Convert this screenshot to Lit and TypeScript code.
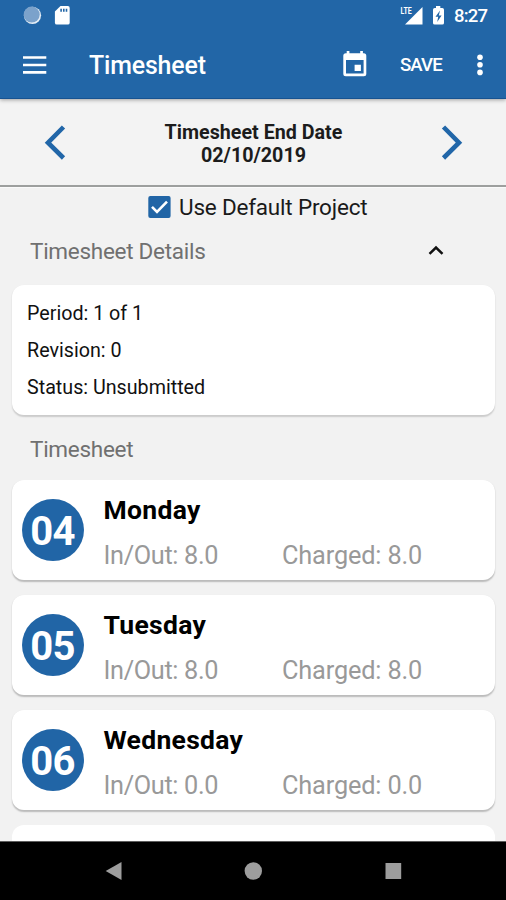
import { LitElement, html, css } from "lit";
import { customElement, property } from "lit/decorators.js";

interface Day {
  date: string;
  name: string;
  inOut: string;
  charged: string;
}

const DAYS: Day[] = [
  { date: "04", name: "Monday", inOut: "8.0", charged: "8.0" },
  { date: "05", name: "Tuesday", inOut: "8.0", charged: "8.0" },
  { date: "06", name: "Wednesday", inOut: "0.0", charged: "0.0" },
];

@customElement("status-bar")
class StatusBar extends LitElement {
  static styles = css`
    :host { display: flex; height: 31px; align-items: flex-start; color: #fff; }
    .left { flex: 1; }
    svg { display: block; }
    .lte { font: 700 9.5px Roboto, sans-serif; fill: #fff; }
    .clock { width: 52px; font: 500 18.5px/32px Roboto, sans-serif; letter-spacing: -0.8px; white-space: nowrap; }
  `;
  render() {
    return html`
      <div class="left">
        <svg width="80" height="31" viewBox="0 0 80 31">
          <circle cx="32.5" cy="15.3" r="8.6" fill="#e4edf5" />
          <circle cx="31.7" cy="14.6" r="8" fill="#7ba2cb" />
          <path d="M60.5 6h7.3q1.9 0 1.9 1.9v14.8q0 1.9-1.9 1.9h-11q-1.9 0-1.9-1.9V11.6z" fill="#fff" />
          <path d="M60.3 8.7h1.6v3h-1.6zM63 8.7h1.6v3H63zM65.7 8.7h1.6v3h-1.6z" fill="#2266a7" />
        </svg>
      </div>
      <svg width="54" height="31" viewBox="400 0 54 31">
        <path d="M422.5 7v17.6H405z" fill="#fff" />
        <path d="M400 5h11.8v10H400z" fill="#2266a7" />
        <text class="lte" x="400.5" y="14" textLength="11.300" lengthAdjust="spacingAndGlyphs">LTE</text>
        <path d="M436 6h4.3v2h2q1.7 0 1.7 1.7v13.2q0 1.7-1.7 1.7h-7.6q-1.7 0-1.7-1.7V9.700q0-1.7 1.700-1.7H436z" fill="#fff" />
        <path d="M440 10.500l-4.500 6.200h2.700l-1 5.200 4.400-6.500h-2.800z" fill="#2266a7" />
      </svg>
      <div class="clock">8:27</div>
    `;
  }
}

@customElement("app-toolbar")
class AppToolbar extends LitElement {
  static styles = css`
    :host { display: flex; height: 68px; align-items: center; color: #fff; }
    svg { display: block; flex: none; }
    .menu { margin: 0 0 1px 23px; }
    .title { flex: 1; margin-left: 42px; padding-top: 2px; font: 500 24.9px/32px Roboto, sans-serif; letter-spacing: -0.15px; }
    .calendar { margin-bottom: 3px; }
    .save { width: 43px; margin: 0 33px 0 33px; font: 500 18.6px/24px Roboto, sans-serif; letter-spacing: -0.9px; }
    .more { margin-right: 22px; }
  `;
  render() {
    return html`
      <svg class="menu" width="24" height="18" viewBox="0 0 24 18">
        <path d="M0 1.500h23.300M0 9h23.300M0 16.300h23.300" stroke="#fff" stroke-width="2.700" />
      </svg>
      <div class="title">Timesheet</div>
      <svg class="calendar" width="24" height="28" viewBox="0 0 24 28">
        <path fill-rule="evenodd" fill="#fff" d="M3.700 1h2.700v2.300h10.800V1h2.700v2.300h.9q2.500 0 2.500 2.500v18q0 2.500-2.500 2.500h-18q-2.500 0-2.500-2.500v-18q0-2.500 2.500-2.500h.9zM3 10v13.600h17.600V10zM11.600 14.700h6.300v6.400h-6.300z" />
      </svg>
      <div class="save">SAVE</div>
      <svg class="more" width="8" height="24" viewBox="0 0 8 24">
        <g fill="#fff"><circle cx="4" cy="4.200" r="2.800" /><circle cx="4" cy="11.800" r="2.800" /><circle cx="4" cy="19.400" r="2.800" /></g>
      </svg>
    `;
  }
}

@customElement("day-card")
class DayCard extends LitElement {
  @property({ attribute: false }) day!: Day;
  static styles = css`
    :host {
      display: flex; height: 100px; flex: none; box-sizing: border-box; padding-left: 9.500px;
      background: #fff; border-radius: 12px; box-shadow: 0 1.500px 1.500px rgba(0, 0, 0, 0.23);
    }
    .date {
      width: 62px; height: 62px; margin-top: 19px; border-radius: 50%; background: #2165a6; color: #fff;
      font: 700 40px/66px Roboto, sans-serif; letter-spacing: -0.7px; text-align: center; flex: none;
    }
    .info { margin-left: 20px; flex: 1; white-space: nowrap; }
    .name { margin-top: 14px; font: 700 26.500px/32px Roboto, sans-serif; letter-spacing: 0.300px; color: #000; }
    .hours { display: grid; grid-template-columns: 178.500px 1fr; margin-top: 14px; font: 400 25.300px/32px Roboto, sans-serif; letter-spacing: -0.350px; color: #999; }
    .charged { letter-spacing: -0.150px; }
  `;
  render() {
    const d = this.day;
    return html`
      <div class="date">${d.date}</div>
      <div class="info">
        <div class="name">${d.name}</div>
        <div class="hours"><span>In/Out: ${d.inOut}</span><span class="charged">Charged: ${d.charged}</span></div>
      </div>
    `;
  }
}

@customElement("app-root")
class AppRoot extends LitElement {
  static styles = css`
    :host {
      display: flex; flex-direction: column; height: 900px; overflow: hidden;
      background: #f2f2f2; font-family: Roboto, sans-serif; color: #111;
    }
    svg { display: block; flex: none; }
    .header { flex: none; height: 99px; box-sizing: border-box; background: #2266a7; border-bottom: 1px solid #175391; box-shadow: 0 1px 4px rgba(0, 0, 0, 0.35); position: relative; }
    .period { flex: none; height: 86px; display: flex; align-items: center; justify-content: space-between; padding: 0 42px 0 43px; background: #f3f3f3; }
    .date { font: 700 19.700px/23px Roboto, sans-serif; text-align: center; color: #1c1c1c; padding-top: 3px; }
    .divider { flex: none; height: 2px; background: #9d9f9e; border-bottom: 1px solid #fafafa; }
    .default { flex: none; height: 38px; display: flex; align-items: center; gap: 8px; padding: 0 0 0 148px; font-size: 22.500px; letter-spacing: -0.200px; color: #1a1a1a; }
    .section { flex: none; height: 59px; display: flex; align-items: center; justify-content: space-between; padding: 0 62px 0 30px; box-sizing: border-box; font-size: 22.500px; letter-spacing: -0.280px; color: #707070; }
    .details-head { padding-bottom: 10px; }
    .details { flex: none; height: 130px; margin: 0 11px 0 12px; box-sizing: border-box; padding: 10px 15px; background: #fff; border-radius: 12px; box-shadow: 0 1.500px 1.500px rgba(0, 0, 0, 0.16); font-size: 19.700px; line-height: 37px; color: #111; }
    .sheet-head { height: 65px; padding-top: 2px; }
    .days { flex: 1; min-height: 0; overflow: hidden; display: flex; flex-direction: column; gap: 15px; padding: 0 11px 0 12px; }
    .next { flex: none; height: 100px; background: #fff; border-radius: 12px; }
    .nav { flex: none; height: 59px; box-sizing: border-box; background: #000; border-top: 1px solid #5e5e5e; display: flex; align-items: center; justify-content: center; }
  `;
  render() {
    return html`
      <div class="header"><status-bar></status-bar><app-toolbar></app-toolbar></div>
      <div class="period">
        <svg width="24" height="38" viewBox="0 0 24 38"><path d="M20.500 4L5 19.700l15.500 15.300" fill="none" stroke="#2166a8" stroke-width="4.600" /></svg>
        <div class="date"><div>Timesheet End Date</div><div>02/10/2019</div></div>
        <svg width="24" height="38" viewBox="0 0 24 38"><path d="M3.500 4L19 19.700 3.500 35" fill="none" stroke="#2166a8" stroke-width="4.600" /></svg>
      </div>
      <div class="divider"></div>
      <div class="default">
        <svg width="23" height="22" viewBox="0 0 23 22"><rect x=".3" width="22.300" height="22" rx="2" fill="#2165a6" /><path d="M4 10.800l5 5L19 5.600" fill="none" stroke="#fff" stroke-width="2.600" /></svg>
        <span>Use Default Project</span>
      </div>
      <div class="section details-head">
        <span>Timesheet Details</span>
        <svg width="16" height="12" viewBox="0 0 16 12"><path d="M1.500 8.800L8 2.500l6.500 6.300" fill="none" stroke="#111" stroke-width="2.500" /></svg>
      </div>
      <div class="details">
        <div>Period: 1 of 1</div>
        <div>Revision: 0</div>
        <div>Status: Unsubmitted</div>
      </div>
      <div class="section sheet-head"><span>Timesheet</span></div>
      <div class="days">
        ${DAYS.map((d) => html`<day-card .day=${d}></day-card>`)}
        <div class="next"></div>
      </div>
      <div class="nav">
        <svg width="300" height="20" viewBox="103 861 300 20">
          <g fill="#9d9d9d"><path d="M105.700 871l15.800-9v18z" /><circle cx="253.300" cy="871" r="8.700" /><path d="M385.500 863h15.700v16h-15.700z" /></g>
        </svg>
      </div>
    `;
  }
}
